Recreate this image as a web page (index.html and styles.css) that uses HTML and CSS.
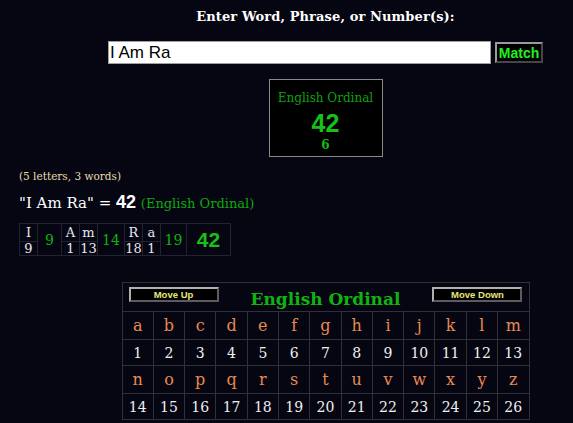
FILE: index.html
```html
<!DOCTYPE html>
<html>
<head>
<meta charset="utf-8">
<link rel="stylesheet" href="styles.css">
</head>
<body>
<div class="col">
  <div class="heading">Enter Word, Phrase, or Number(s):</div>
  <div class="entry">
    <input class="word" type="text" value="I Am Ra">
    <button class="match">Match</button>
  </div>
  <div class="box">
    <div class="box-name">English Ordinal</div>
    <div class="box-val">42</div>
    <div class="box-red">6</div>
  </div>
</div>
<div class="result">
  <div class="count">(5 letters, 3 words)</div>
  <div class="equation">"I Am Ra" = <b class="eq-num">42</b> <span class="eq-ciph">(English Ordinal)</span></div>
  <table class="brk">
    <tr class="brk-let">
      <td class="l">I</td>
      <td class="w w1" rowspan="2">9</td>
      <td class="l">A</td>
      <td class="l">m</td>
      <td class="w w2" rowspan="2">14</td>
      <td class="l">R</td>
      <td class="l">a</td>
      <td class="w w3" rowspan="2">19</td>
      <td class="tot" rowspan="2">42</td>
    </tr>
    <tr class="brk-num">
      <td class="n">9</td>
      <td class="n">1</td>
      <td class="n">13</td>
      <td class="n">18</td>
      <td class="n">1</td>
    </tr>
  </table>
</div>
<div class="col">
  <table class="chart">
    <tr>
      <td class="chart-head" colspan="13">
        <div class="head-row">
          <button class="mv">Move Up</button>
          <span class="chart-title">English Ordinal</span>
          <button class="mv">Move Down</button>
        </div>
      </td>
    </tr>
    <tr class="let"><td>a</td><td>b</td><td>c</td><td>d</td><td>e</td><td>f</td><td>g</td><td>h</td><td>i</td><td>j</td><td>k</td><td>l</td><td>m</td></tr>
    <tr class="num"><td>1</td><td>2</td><td>3</td><td>4</td><td>5</td><td>6</td><td>7</td><td>8</td><td>9</td><td>10</td><td>11</td><td>12</td><td>13</td></tr>
    <tr class="let"><td>n</td><td>o</td><td>p</td><td>q</td><td>r</td><td>s</td><td>t</td><td>u</td><td>v</td><td>w</td><td>x</td><td>y</td><td>z</td></tr>
    <tr class="num"><td>14</td><td>15</td><td>16</td><td>17</td><td>18</td><td>19</td><td>20</td><td>21</td><td>22</td><td>23</td><td>24</td><td>25</td><td>26</td></tr>
  </table>
</div>
</body>
</html>
```
FILE: styles.css
```css
html, body {
  margin: 0;
  padding: 0;
  background: #060612;
  overflow: hidden;
}
body {
  width: 573px;
  height: 423px;
  font-family: "DejaVu Serif", serif;
}
.col {
  margin-left: 108px;
  width: 435px;
  display: flex;
  flex-direction: column;
  align-items: center;
}
.heading {
  margin-top: 9px;
  color: #ffffff;
  font-weight: bold;
  font-size: 13px;
  line-height: 16px;
  letter-spacing: 0.1px;
}
.entry {
  margin-top: 16px;
  display: flex;
  align-items: center;
  gap: 4px;
  width: 435px;
}
.word {
  box-sizing: border-box;
  width: 383px;
  height: 23px;
  margin: 0;
  padding: 0 1px;
  border: 1px solid #a0a0a0;
  background: #ffffff;
  color: #000;
  font-family: "Liberation Sans", Arial, sans-serif;
  font-size: 17px;
  outline: none;
}
.match {
  box-sizing: border-box;
  width: 48px;
  height: 21px;
  margin: 0;
  padding: 0;
  background: #000;
  border: 2px outset #9a9a9a;
  color: #22ee22;
  font-family: "Liberation Sans", Arial, sans-serif;
  font-weight: bold;
  font-size: 14px;
}
.box {
  box-sizing: border-box;
  margin-top: 15px;
  width: 114px;
  height: 78px;
  border: 1px solid #8a8a8a;
  background: #000;
  display: flex;
  flex-direction: column;
  align-items: center;
}
.box-name {
  margin-top: 11px;
  font-size: 12px;
  line-height: 14px;
  color: #10a010;
}
.box-val {
  margin-top: 6px;
  font-family: "Liberation Sans", Arial, sans-serif;
  font-weight: bold;
  font-size: 25px;
  line-height: 24px;
  color: #18c018;
}
.box-red {
  margin-top: 3px;
  font-weight: bold;
  font-size: 12px;
  line-height: 15px;
  color: #18b818;
}
.result {
  margin-left: 19px;
  margin-top: 12px;
}
.count {
  color: #e8dcb0;
  font-size: 10.5px;
  line-height: 14px;
}
.equation {
  margin-top: 9px;
  color: #ffffff;
  font-size: 15px;
  line-height: 20px;
}
.eq-num {
  font-family: "Liberation Sans", Arial, sans-serif;
  font-size: 18px;
}
.eq-ciph {
  color: #10a810;
  font-size: 13px;
}
.brk {
  margin-top: 9px;
  border-collapse: collapse;
}
.brk td {
  border: 1px solid #222230;
  padding: 0;
  text-align: center;
}
.brk-let td.l {
  height: 17px;
  line-height: 17px;
}
.brk-num td.n {
  height: 13px;
  line-height: 13px;
}
.brk .l, .brk .n {
  width: 17px;
  color: #e6e6ee;
  font-size: 13px;
}
.brk .w {
  color: #10b010;
  font-size: 14px;
}
.brk .w1 { width: 23px; }
.brk .w2 { width: 26px; }
.brk .w3 { width: 25px; }
.brk .tot {
  width: 43px;
  color: #18c018;
  font-family: "Liberation Sans", Arial, sans-serif;
  font-weight: bold;
  font-size: 21px;
}
.chart {
  margin-top: 26px;
  border-collapse: collapse;
  width: 408px;
  table-layout: fixed;
}
.chart td {
  border: 1px solid #303038;
  padding: 0;
  text-align: center;
}
.chart-head {
  height: 28px;
  vertical-align: top;
}
.head-row {
  display: flex;
  align-items: flex-start;
  justify-content: space-between;
  padding: 4px 6px 0;
}
.mv {
  box-sizing: border-box;
  width: 90px;
  height: 15px;
  margin: 0;
  padding: 0;
  background: #000;
  border: 2px outset #b0b0b0;
  color: #e8e878;
  font-family: "Liberation Sans", Arial, sans-serif;
  font-weight: bold;
  font-size: 9.5px;
  line-height: 11px;
}
.chart-title {
  color: #10b410;
  font-weight: bold;
  font-size: 17px;
  line-height: 20px;
  margin-top: 2px;
}
.let td {
  height: 27px;
  color: #e88a50;
  font-size: 16px;
}
.num td {
  height: 25px;
  color: #f0f0f0;
  font-size: 14px;
}
```
